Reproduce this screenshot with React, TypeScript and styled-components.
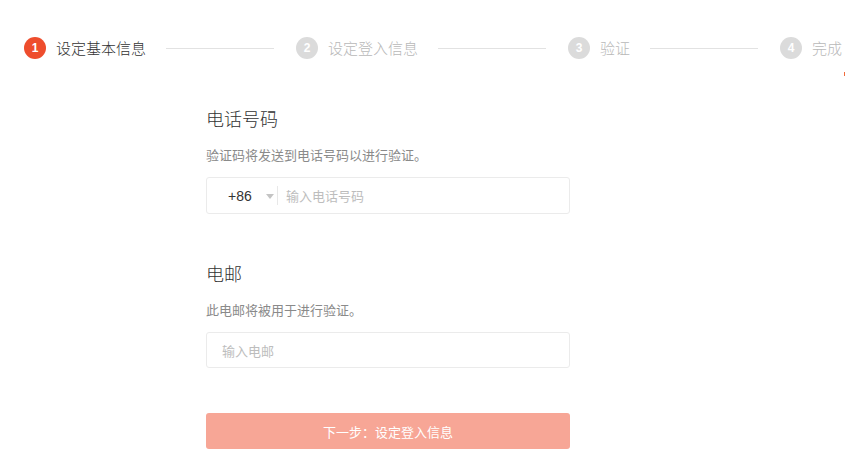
import React from "react";
import styled, { createGlobalStyle } from "styled-components";

const GlobalStyle = createGlobalStyle`
  html, body {
    margin: 0;
    padding: 0;
    background: #ffffff;
  }
  body {
    font-family: "Liberation Sans", "Noto Sans CJK SC", sans-serif;
    color: #333;
  }
`;

const Page = styled.div`
  position: relative;
  width: 852px;
  height: 469px;
  overflow: hidden;
  background: #fff;
`;

const Stepper = styled.div`
  display: flex;
  align-items: center;
  padding: 37px 0 0 24px;
  white-space: nowrap;
`;

const Step = styled.div`
  display: flex;
  align-items: center;
  flex-shrink: 0;
`;

const StepCircle = styled.span<{ $active?: boolean }>`
  width: 22px;
  height: 22px;
  border-radius: 50%;
  background: ${(p) => (p.$active ? "#ee4d2d" : "#dbdbdb")};
  color: #fff;
  font-size: 12px;
  font-weight: bold;
  display: flex;
  align-items: center;
  justify-content: center;
  line-height: 1;
`;

const StepLabel = styled.span<{ $active?: boolean }>`
  margin-left: 10px;
  font-size: 15px;
  line-height: 22px;
  color: ${(p) => (p.$active ? "#333" : "#b8b8b8")};
  font-family: "Noto Sans CJK SC", sans-serif;
  font-weight: 300;
`;

const StepLine = styled.span`
  flex-shrink: 0;
  width: 108px;
  height: 1px;
  background: #e2e2e2;
  margin: 0 22px 0 20px;
`;

const Marker = styled.span`
  position: absolute;
  left: 844px;
  top: 72px;
  width: 1px;
  height: 4px;
  background: #f26b3a;
`;

const Form = styled.div`
  width: 364px;
  margin: 46px 0 0 206px;
`;

const Section = styled.section<{ $first?: boolean }>`
  margin-top: ${(p) => (p.$first ? "0" : "46px")};
`;

const Title = styled.h2`
  margin: 0;
  font-size: 18px;
  line-height: 26px;
  font-weight: 300;
  color: #333;
  font-family: "Noto Sans CJK SC", sans-serif;
`;

const Desc = styled.p`
  margin: 14px 0 0;
  font-size: 13px;
  line-height: 20px;
  color: #8a8a8a;
  font-family: "Noto Sans CJK SC", sans-serif;
`;

const InputBox = styled.div<{ $h: number }>`
  box-sizing: border-box;
  margin-top: 12px;
  height: ${(p) => p.$h}px;
  border: 1px solid #ebebeb;
  border-radius: 3px;
  display: flex;
  align-items: center;
`;

const Prefix = styled.div`
  box-sizing: border-box;
  width: 71px;
  height: 100%;
  display: flex;
  align-items: center;
  padding-left: 21px;
  position: relative;
  font-size: 14px;
  color: #333;
  font-family: "Liberation Sans", sans-serif;
  &::after {
    content: "";
    position: absolute;
    right: 0;
    top: 8px;
    bottom: 8px;
    width: 1px;
    background: #e8e8e8;
  }
`;

const Caret = styled.span`
  margin-left: 14px;
  width: 0;
  height: 0;
  border-left: 4px solid transparent;
  border-right: 4px solid transparent;
  border-top: 5px solid #c4c4c4;
  margin-top: 2px;
`;

const Field = styled.input<{ $pl: number }>`
  flex: 1;
  min-width: 0;
  height: 100%;
  box-sizing: border-box;
  border: none;
  outline: none;
  background: transparent;
  padding: 0 0 0 ${(p) => p.$pl}px;
  font-size: 13px;
  color: #333;
  font-family: "Noto Sans CJK SC", sans-serif;
  &::placeholder {
    color: #bdbdbd;
  }
`;

const NextButton = styled.button`
  display: block;
  width: 100%;
  height: 36px;
  margin-top: 45px;
  border: none;
  border-radius: 3px;
  background: #f7a696;
  color: #fff;
  font-size: 13px;
  font-family: "Noto Sans CJK SC", sans-serif;
  cursor: not-allowed;
`;

const steps = ["设定基本信息", "设定登入信息", "验证", "完成"];

export default function App() {
  return (
    <Page>
      <GlobalStyle />
      <Stepper>
        {steps.map((s, i) => (
          <React.Fragment key={s}>
            {i > 0 && <StepLine />}
            <Step>
              <StepCircle $active={i === 0}>{i + 1}</StepCircle>
              <StepLabel $active={i === 0}>{s}</StepLabel>
            </Step>
          </React.Fragment>
        ))}
      </Stepper>
      <Marker />
      <Form>
        <Section $first>
          <Title>电话号码</Title>
          <Desc>验证码将发送到电话号码以进行验证。</Desc>
          <InputBox $h={37}>
            <Prefix>
              +86
              <Caret />
            </Prefix>
            <Field $pl={8} placeholder="输入电话号码" />
          </InputBox>
        </Section>
        <Section>
          <Title>电邮</Title>
          <Desc>此电邮将被用于进行验证。</Desc>
          <InputBox $h={36}>
            <Field $pl={15} placeholder="输入电邮" />
          </InputBox>
        </Section>
        <NextButton disabled>下一步：设定登入信息</NextButton>
      </Form>
    </Page>
  );
}
